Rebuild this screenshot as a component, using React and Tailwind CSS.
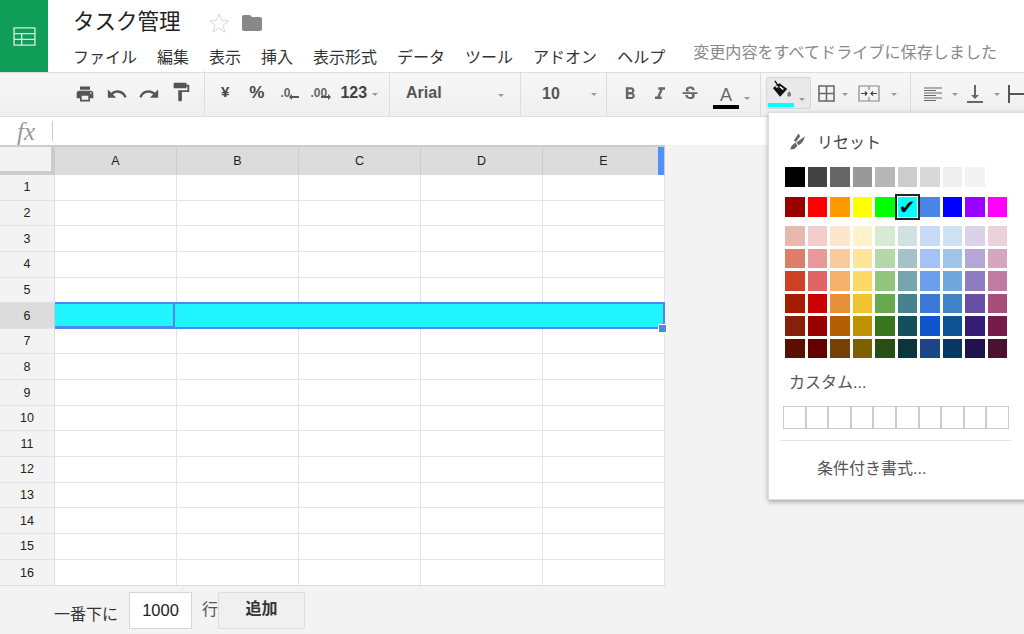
import {
  MdPrint,
  MdUndo,
  MdRedo,
  MdFormatPaint,
  MdFormatBold,
  MdFormatItalic,
  MdStrikethroughS,
  MdVerticalAlignBottom,
  MdFolder,
} from "react-icons/md";

const swatches = [
  ["#980000", "#ff0000", "#ff9900", "#ffff00", "#00ff00", "#00ffff", "#4a86e8", "#0000ff", "#9900ff", "#ff00ff"],
  ["#e6b8af", "#f4cccc", "#fce5cd", "#fff2cc", "#d9ead3", "#d0e0e3", "#c9daf8", "#cfe2f3", "#d9d2e9", "#ead1dc"],
  ["#dd7e6b", "#ea9999", "#f9cb9c", "#ffe599", "#b6d7a8", "#a2c4c9", "#a4c2f4", "#9fc5e8", "#b4a7d6", "#d5a6bd"],
  ["#cc4125", "#e06666", "#f6b26b", "#ffd966", "#93c47d", "#76a5af", "#6d9eeb", "#6fa8dc", "#8e7cc3", "#c27ba0"],
  ["#a61c00", "#cc0000", "#e69138", "#f1c232", "#6aa84f", "#45818e", "#3c78d8", "#3d85c6", "#674ea7", "#a64d79"],
  ["#85200c", "#990000", "#b45f06", "#bf9000", "#38761d", "#134f5c", "#1155cc", "#0b5394", "#351c75", "#741b47"],
  ["#5b0f00", "#660000", "#783f04", "#7f6000", "#274e13", "#0c343d", "#1c4587", "#073763", "#20124d", "#4c1130"],
];
const grays = ["#000000", "#434343", "#666666", "#999999", "#b7b7b7", "#cccccc", "#d9d9d9", "#efefef", "#f3f3f3"];
const menus = ["ファイル", "編集", "表示", "挿入", "表示形式", "データ", "ツール", "アドオン", "ヘルプ"];
const cols = ["A", "B", "C", "D", "E"];
const rows = Array.from({ length: 16 }, (_, i) => i + 1);

const Caret = ({ className }) => (
  <span className={"w-0 h-0 border-x-[3px] border-x-transparent border-t-[3px] border-t-[#999] " + (className || "")} />
);

const Swatch = ({ color }) => (
  <div className="w-[19.5px] h-[19.5px] shrink-0" style={{ backgroundColor: color }} />
);

const Arrow = ({ dir }) => (
  <svg viewBox="0 0 10 6" className="absolute top-[10px] left-[9px] w-[10px] h-[6px]" fill="#555">
    {dir === "left" ? <path d="M0 3l3-3v2h7v2H3v2z" /> : <path d="M10 3L7 0v2H0v2h7v2z" />}
  </svg>
);

const Popup = () => (
  <div className="absolute left-[768px] top-[112px] w-[270px] h-[388px] bg-white border border-[#ddd] shadow-[0_2px_5px_rgba(0,0,0,0.3)] flex flex-col pl-[16px]">
    <div className="flex items-center h-[20px] mt-[20px]">
      <svg viewBox="0 0 16 16" className="w-[17px] h-[17px] ml-[4px] -mt-[3px]" fill="#666">
        <path d="M9 0.5 4.5 7l2 1.5L10.5 3zM15 3 7 9l2 2.5c2.5-1 5-4 6-8.500zM6 9 2.500 12 1 15.500 5 15l3-3z" />
      </svg>
      <span className="ml-[11px] text-[16px] text-[#444]">リセット</span>
    </div>
    <div className="flex gap-[3px] mt-[14px]">
      {grays.map((c) => <Swatch key={c} color={c} />)}
    </div>
    <div className="flex flex-col gap-[3px] mt-[10.5px]">
      {swatches.map((row, i) => (
        <div key={i} className={"flex gap-[3px] " + (i === 0 ? "mb-[6.5px]" : "")}>
          {row.map((c) =>
            c === "#00ffff" ? (
              <div key={c} className="w-[19.5px] h-[19.5px] shrink-0 bg-[#00ffff] outline-2 outline-offset-1 outline-[#222] flex items-center justify-center font-['DejaVu_Sans',sans-serif] text-[20px] leading-none text-[#111]">✔</div>
            ) : (
              <Swatch key={c} color={c} />
            )
          )}
        </div>
      ))}
    </div>
    <div className="mt-[15px] ml-[4px] text-[16px] leading-[20px] text-[#555]">カスタム...</div>
    <div className="flex mt-[13px] -ml-[2px] w-[226px] h-[23px] border border-[#ccc] divide-x-2 divide-[#ccc]">
      {Array.from({ length: 10 }, (_, i) => <div key={i} className="flex-1" />)}
    </div>
    <div className="h-px bg-[#e5e5e5] w-[231px] -ml-[5px] mt-[11px]" />
    <div className="mt-[18px] ml-[32px] text-[16px] leading-[20px] text-[#555]">条件付き書式...</div>
  </div>
);

const Toolbar = () => (
  <div className="flex h-[45px] border-y border-[#ddd] bg-gradient-to-b from-[#f7f7f7] to-[#efefef] text-[#555]">
    <div className="w-[205px] flex items-center border-r border-[#ddd] pl-[75px] shrink-0 -mt-[2px]">
      <MdPrint size={20} />
      <MdUndo size={22} className="ml-[11px]" />
      <MdRedo size={22} className="ml-[10px]" />
      <MdFormatPaint size={22} className="ml-[10px] -mt-[4px]" />
    </div>
    <div className="w-[185px] flex items-center border-r border-[#ddd] pl-[16px] shrink-0 font-bold text-[15px] pb-[4px]">
      <span className="text-[#444]">¥</span>
      <span className="ml-[20px] text-[17px] text-[#444]">%</span>
      <span className="ml-[16px] relative text-[12px] w-[20px] text-[#666]">
        .0
        <Arrow dir="left" />
      </span>
      <span className="ml-[10px] relative text-[12px] w-[20px] text-[#666]">
        .00
        <span className="absolute left-[2px] top-0 w-[20px] h-[16px]">
          <Arrow dir="right" />
        </span>
      </span>
      <span className="ml-[10px] text-[16px] text-[#444]">123</span>
      <Caret className="ml-[5px] mt-[4px]" />
    </div>
    <div className="w-[131px] flex items-center border-r border-[#ddd] pl-[16px] shrink-0 font-bold text-[16px] pb-[3px]">
      <span>Arial</span>
      <Caret className="ml-[56px] mt-[4px]" />
    </div>
    <div className="w-[86px] flex items-center border-r border-[#ddd] pl-[21px] shrink-0 font-bold text-[16px] pb-[1px]">
      <span>10</span>
      <Caret className="ml-[31px]" />
    </div>
    <div className="w-[154px] flex items-center border-r border-[#ddd] pl-[13px] shrink-0 text-[#666]">
      <MdFormatBold size={20} className="w-[20px] -mt-[2px]" />
      <MdFormatItalic size={20} className="ml-[10px] -mt-[2px]" />
      <MdStrikethroughS size={20} className="ml-[10px] -mt-[2px]" />
      <div className="ml-[13px] flex flex-col items-center w-[26px] pt-[4px]">
        <span className="text-[18px] leading-[20px] font-normal">A</span>
        <span className="w-[26px] h-[4px] bg-black" />
      </div>
      <Caret className="ml-[5px] mt-[8px]" />
    </div>
    <div className="w-[150px] flex items-center border-r border-[#ddd] pl-[5px] shrink-0 text-[#666]">
      <div className="w-[45px] h-[32px] -mt-[4px] bg-[#e9e9e9] border border-[#d5d5d5] rounded-[2px] relative">
        <svg viewBox="0 0 24 20" className="absolute left-[3px] top-[2px] w-[23px] h-[20px]" fill="#111">
          <path d="M3 8 10 3l8 6-7.500 8z" />
          <path d="M6 7c3-1.500 6 .500 8 2.500" fill="none" stroke="#fff" strokeWidth="1.500" />
          <path d="M5 .5l5 7" fill="none" stroke="#111" strokeWidth="1.500" />
          <path fill="#777" d="M20 11s-2 2.400-2 4c0 1.100.9 2 2 2s2-.9 2-2c0-1.600-2-4-2-4z" />
        </svg>
        <span className="absolute left-[1px] bottom-[1px] w-[26px] h-[4px] bg-[#00ffff]" />
        <Caret className="absolute right-[5px] bottom-[7px]" />
      </div>
      <svg viewBox="0 0 17 17" className="w-[17px] h-[17px] ml-[7px] -mt-[3px]" fill="none" stroke="#666" strokeWidth="1.500">
        <path d="M1 1h15v15H1zM8.500 1v15M1 8.500h15" />
      </svg>
      <Caret className="ml-[7px]" />
      <svg viewBox="0 0 22 17" className="w-[22px] h-[17px] ml-[10px] -mt-[3px]" fill="none" stroke="#888" strokeWidth="1.200">
        <path d="M1 1h20v15H1zM11 1v4M11 12v4" />
        <path d="M3 8.500h6M7 6.500l2 2-2 2M19 8.500h-6M15 6.500l-2 2 2 2" stroke="#444" />
      </svg>
      <Caret className="ml-[11px]" />
    </div>
    <div className="flex items-center pl-[13px] text-[#666]">
      <svg viewBox="0 0 18 14" className="w-[18px] h-[14px] -mt-[2px] shrink-0" fill="none" stroke="#666" strokeWidth="1.200">
        <path d="M0 1h18M0 3.500h12M0 6h18M0 8.500h12M0 11h18M0 13.500h12" />
      </svg>
      <Caret className="ml-[10px]" />
      <MdVerticalAlignBottom size={24} className="ml-[5px] -mt-[2px] shrink-0" />
      <Caret className="ml-[7px]" />
      <svg viewBox="0 0 16 20" className="w-[16px] h-[20px] ml-[8px] -mt-[2px] shrink-0" fill="#555">
        <rect x="0" y="1" width="2" height="18" />
        <rect x="2" y="9" width="14" height="2" />
      </svg>
    </div>
  </div>
);

const Grid = () => (
  <div className="w-[665px] border-b border-[#ddd] bg-white">
    <div className="flex h-[30px] border-t-2 border-[#ccc]">
      <div className="w-[55px] bg-[#f3f3f3] border-r-[4px] border-b-[4px] border-[#ccc]" />
      {cols.map((c) => (
        <div key={c} className="relative w-[122px] bg-[#dcdcdc] border-r border-[#ccc] flex items-center justify-center text-[12.5px] text-[#222]">
          {c}
          {c === "E" && <span className="absolute right-0 top-0 bottom-0 w-[6px] bg-[#4d90fe]" />}
        </div>
      ))}
    </div>
    {rows.map((n) =>
      n === 6 ? (
        <div key={n} className="flex h-[25.65px] border-b border-[#e3e3e3]">
          <div className="w-[55px] bg-[#dcdcdc] border-r border-[#ccc] flex items-center justify-center pt-[2px] text-[12.5px] text-[#222]">{n}</div>
          <div className="relative flex-1 flex -mt-px -mb-px bg-[#20f5ff] border-t-2 border-r-2 border-[#4d88f0]">
            <div className="w-[120px] border-r-2 border-b-[3px] border-[#4d88f0]" />
            <div className="flex-1 border-b-2 border-[#4d88f0]" />
            <span className="absolute -right-[4px] -bottom-[4px] w-[9px] h-[9px] bg-[#4d88f0] border border-white" />
          </div>
        </div>
      ) : (
        <div key={n} className="flex h-[25.65px] border-b border-[#e3e3e3] last:border-b-0">
          <div className="w-[55px] bg-[#f3f3f3] border-r border-[#ddd] flex items-center justify-center pt-px text-[12.5px] text-[#222]">{n}</div>
          {cols.map((c) => (
            <div key={c} className="w-[122px] border-r border-[#e3e3e3]" />
          ))}
        </div>
      )
    )}
  </div>
);

export default function App() {
  return (
    <div className="relative w-[1024px] h-[634px] overflow-hidden bg-[#f3f3f3] font-['Liberation_Sans','Noto_Sans_CJK_JP',sans-serif]">
      <div className="flex h-[72px] bg-white">
        <div className="w-[48px] bg-[#0f9d58] flex items-center justify-center">
          <svg viewBox="0 0 24 20" className="w-[23px] h-[19px]" fill="none" stroke="#d5ece0" strokeWidth="1.400">
            <path d="M1 1h22v18H1zM1 7h22M1 13h22M9 7v12" />
          </svg>
        </div>
        <div className="flex-1 pl-[25px]">
          <div className="flex items-center h-[46px] pb-[1px]">
            <span className="text-[21.5px] text-[#222]">タスク管理</span>
            <svg viewBox="0 0 20 20" className="w-[20px] h-[20px] ml-[28px]" fill="none" stroke="#d8d8d8" strokeWidth="1">
              <path d="M10 1l2.500 6.500 7 .4-5.400 4.500 1.800 6.800L10 15l-5.900 3.700 1.800-6.800L.5 7.900l7-.4z" />
            </svg>
            <MdFolder size={24} className="ml-[11px] text-[#888]" />
          </div>
          <div className="flex items-center">
            <div className="flex gap-5 text-[16px] leading-[24px] text-[#333]">
              {menus.map((m) => <span key={m}>{m}</span>)}
            </div>
            <span className="ml-[28px] -mt-[12px] text-[16.1px] leading-[24px] text-[#888] whitespace-nowrap">変更内容をすべてドライブに保存しました</span>
          </div>
        </div>
      </div>
      <Toolbar />
      <div className="flex items-center h-[28px] bg-white">
        <span className="w-[52px] text-center font-['Liberation_Serif',serif] italic text-[25px] leading-none text-[#999]">fx</span>
        <span className="w-px h-[20px] bg-[#ccc]" />
      </div>
      <Grid />
      <div className="flex items-center h-[38px] mt-[5px] pl-[54px] text-[16px] text-[#333]">
        <span className="mt-[9px]">一番下に</span>
        <div className="ml-[11px] w-[63px] h-[37px] bg-white border border-[#d5d5d5] flex items-center justify-center text-[16.5px] text-[#222]">1000</div>
        <span className="ml-[10px] text-[#555]">行</span>
        <div className="w-[87px] h-[37px] bg-[#f0f0f0] border border-[#ddd] rounded-[2px] flex items-center justify-center pb-[2px] font-bold">追加</div>
      </div>
      <Popup />
    </div>
  );
}
